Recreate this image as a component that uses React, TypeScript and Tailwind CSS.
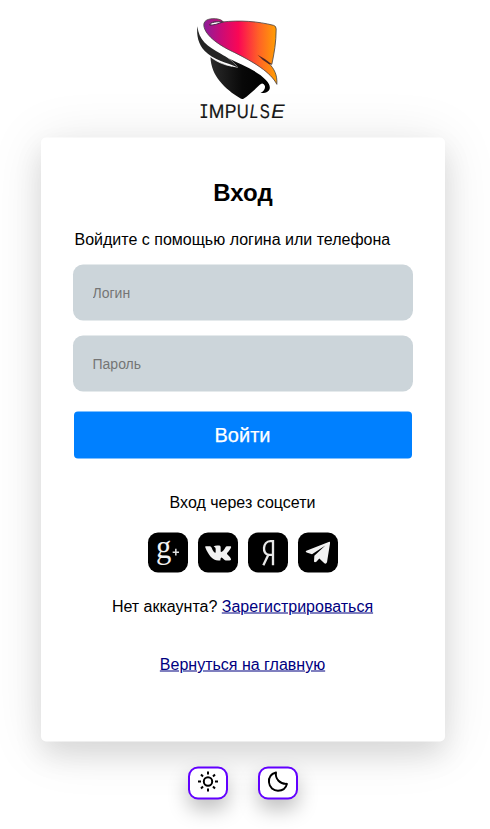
import type { ReactNode } from "react";

function Logo() {
  return (
    <svg
      className="h-[104px] w-[100px] shrink-0 translate-x-[1.500px] overflow-visible"
      viewBox="45 33 300 312"
      role="img"
      aria-label="Impulse"
    >
      <defs>
        <linearGradient id="flame" x1="72" x2="295" y1="0" y2="0" gradientUnits="userSpaceOnUse">
          <stop offset="0" stopColor="#8b1e9b" />
          <stop offset=".23" stopColor="#c80c78" />
          <stop offset=".47" stopColor="#fa0755" />
          <stop offset=".75" stopColor="#ff6425" />
          <stop offset="1" stopColor="#ffa400" />
        </linearGradient>
        <linearGradient id="coal" x1="92" x2="268" y1="0" y2="0" gradientUnits="userSpaceOnUse">
          <stop offset="0" stopColor="#2b2b2b" />
          <stop offset=".55" stopColor="#080808" />
          <stop offset="1" stopColor="#000" />
        </linearGradient>
      </defs>
      <path
        d="M90 60C91 51 112 48 128 51C180 45 236 49 282 61Q290 63 290 72C290 112 284 145 277 178L268 175C284 191 294 210 292 238C274 202 224 172 166 143C126 125 77 94 73 62C71 42 96 39 115 42Q126 44 132 51Z"
        fill="url(#flame)"
        stroke="#4d4444"
        strokeWidth="2.500"
        strokeLinejoin="round"
      />
      <path d="M91 60C92 51 114 49 128 51C116 57 102 61 91 60Z" fill="#fff" stroke="#4d204d" strokeWidth="3" />
      <path d="M234 149Q258 161 277 178L268 177Q250 167 234 149Z" fill="#4d2424" />
      <path
        d="M54 64C57 104 84 126 124 146C143 157 162 169 176 188C142 172 100 164 75 137C57 120 50 89 54 64Z"
        fill="#252525"
      />
      <path
        d="M93 156C111 171 145 183 176 188C169 178 158 168 147 160C183 178 236 198 259 225C281 247 271 266 243 264C258 257 261 241 250 236Q246 234 240 240C226 254 207 271 192 281Q187 284 181 279C138 253 94 213 93 156Z"
        fill="url(#coal)"
      />
      <path d="M95 157C112 171 134 180 158 184" fill="none" stroke="#fff" strokeWidth="2" />
      <g
        className="font-['Liberation_Sans',Arial,sans-serif] text-[59px]"
        fill="#151515"
        stroke="#151515"
        strokeWidth=".6"
        textRendering="geometricPrecision"
      >
        <text x="59" y="339" textLength="28" lengthAdjust="spacingAndGlyphs" className="font-['DejaVu_Sans_Mono',monospace] text-[57px]">I</text>
        <text x="88" y="339" textLength="47" lengthAdjust="spacingAndGlyphs">M</text>
        <text x="136" y="339" textLength="35" lengthAdjust="spacingAndGlyphs">P</text>
        <text x="172" y="339" textLength="36" lengthAdjust="spacingAndGlyphs">U</text>
        <text x="211" y="339" textLength="26" lengthAdjust="spacingAndGlyphs" className="italic">L</text>
        <text x="241" y="339" textLength="30" lengthAdjust="spacingAndGlyphs">S</text>
        <text x="275" y="339" textLength="40" lengthAdjust="spacingAndGlyphs" className="italic">E</text>
      </g>
    </svg>
  );
}

function Social({ label, children }: { label: string; children: ReactNode }) {
  return (
    <button aria-label={label} className="h-10 w-10 rounded-[10px] bg-black">
      <svg viewBox="0 0 120 120" className="h-10 w-10 overflow-visible">{children}</svg>
    </button>
  );
}

const themeButton =
  "flex h-[33px] w-10 items-start justify-center rounded-[10px] border-2 border-[#6200ff] bg-white pt-[1px] shadow-[0_10px_20px_rgba(0,0,0,0.25)]";

export default function App() {
  return (
    <main className="flex h-[829px] w-[490px] flex-col items-center overflow-hidden bg-white pr-1 pt-4 font-['Liberation_Sans',Arial,sans-serif] text-base text-black">
      <Logo />
      <section className="mt-[17px] flex h-[604px] w-[404px] shrink-0 translate-y-[0.5px] flex-col items-center rounded-[5px] bg-white px-8 shadow-[0_14px_28px_rgba(0,0,0,0.1),0_5px_55px_rgba(0,0,0,0.1)]">
        <h1 className="mt-[41px] text-2xl leading-7 font-bold">Вход</h1>
        <p className="mt-6 w-full pl-[1.500px] leading-[18px]">Войдите с помощью логина или телефона</p>
        <input
          placeholder="Логин"
          className="mt-4 h-14 w-[340px] shrink-0 rounded-[10px] bg-[#ccd5da] pr-5 pl-[19.500px] text-sm placeholder:text-[#757575]"
        />
        <input
          type="password"
          placeholder="Пароль"
          className="mt-[15px] h-14 w-[340px] shrink-0 rounded-[10px] bg-[#ccd5da] pr-5 pl-[19.500px] text-sm placeholder:text-[#757575]"
        />
        <button className="mt-5 h-[47px] w-[338px] shrink-0 rounded-[4px] bg-[#0080ff] pr-px pb-[2px] text-xl text-white [-webkit-text-stroke:0.25px_white]">
          Войти
        </button>
        <p className="mt-[35px] pr-px leading-[18px]">Вход через соцсети</p>
        <div className="mt-[21px] flex gap-[10px]">
          <Social label="Google Plus">
            <text
              x="24"
              y="76"
              textLength="46"
              lengthAdjust="spacingAndGlyphs"
              fill="#f2f2f2"
              className="font-['Liberation_Serif',serif] text-[104px]"
            >
              g
            </text>
            <path fill="none" stroke="#e0e0e0" strokeWidth="4.500" d="M74 59H93M83.500 49V69" />
          </Social>
          <Social label="VK">
            <path
              fill="#f2f2f2"
              d="M23 41H36Q39 41 41 46C45 57 51 64 53 59V49Q53 44 47 42Q50 39 58 39H64Q68 39 68 44V57C70 62 79 52 82 45Q84 41 87 41H98C103 43 94 54 87 62C85 65 101 75 99 82Q98 84 94 84H83C79 84 73 74 70 75Q67 76 67 84H61C43 84 31 67 22 45Q21 41 23 41Z"
            />
          </Social>
          <Social label="Yandex">
            <path
              fill="none"
              stroke="#e8e8e8"
              strokeWidth="7"
              d="M75 98V26H67C44 26 41 66 63 67H75M61 67L46 98"
            />
          </Social>
          <Social label="Telegram">
            <path
              fill="#f2f2f2"
              d="M94 28L25 55C22 57 23 59 26 60L42 65L82 39L49 70L48 87Q50 91 55 88L64 78L79 92Q84 96 87 89L96 33Q97 27 94 28Z"
            />
          </Social>
        </div>
        <p className="mt-[25px] pr-px leading-[18px]">
          Нет аккаунта? <a className="text-[#000080] underline">Зарегистрироваться</a>
        </p>
        <a className="mt-10 mr-px leading-[18px] text-[#000080] underline">Вернуться на главную</a>
      </section>
      <div className="mt-[25px] flex translate-y-[0.5px] gap-[30px]">
        <button aria-label="Светлая тема" className={themeButton}>
          <svg viewBox="0 0 24 24" className="h-6 w-6" fill="none" stroke="#000" strokeWidth="2">
            <circle cx="12" cy="12" r="4.200" />
            <path d="M12 2V5M12 19V22M2 12H5M19 12H22M5 5L7 7M17 17L19 19M19 5L17 7M7 17L5 19" />
          </svg>
        </button>
        <button aria-label="Тёмная тема" className={themeButton}>
          <svg viewBox="0 0 24 24" className="h-6 w-6" fill="none" stroke="#000" strokeWidth="1.900" strokeLinejoin="round">
            <path d="M10 3C4.500 4.500 2.500 8.500 3 13C3.500 18 7.500 21.200 12 21.200C16.500 21.200 20 18.500 21 14.300C14 14.800 9 9.500 10 3Z" />
          </svg>
        </button>
      </div>
    </main>
  );
}
